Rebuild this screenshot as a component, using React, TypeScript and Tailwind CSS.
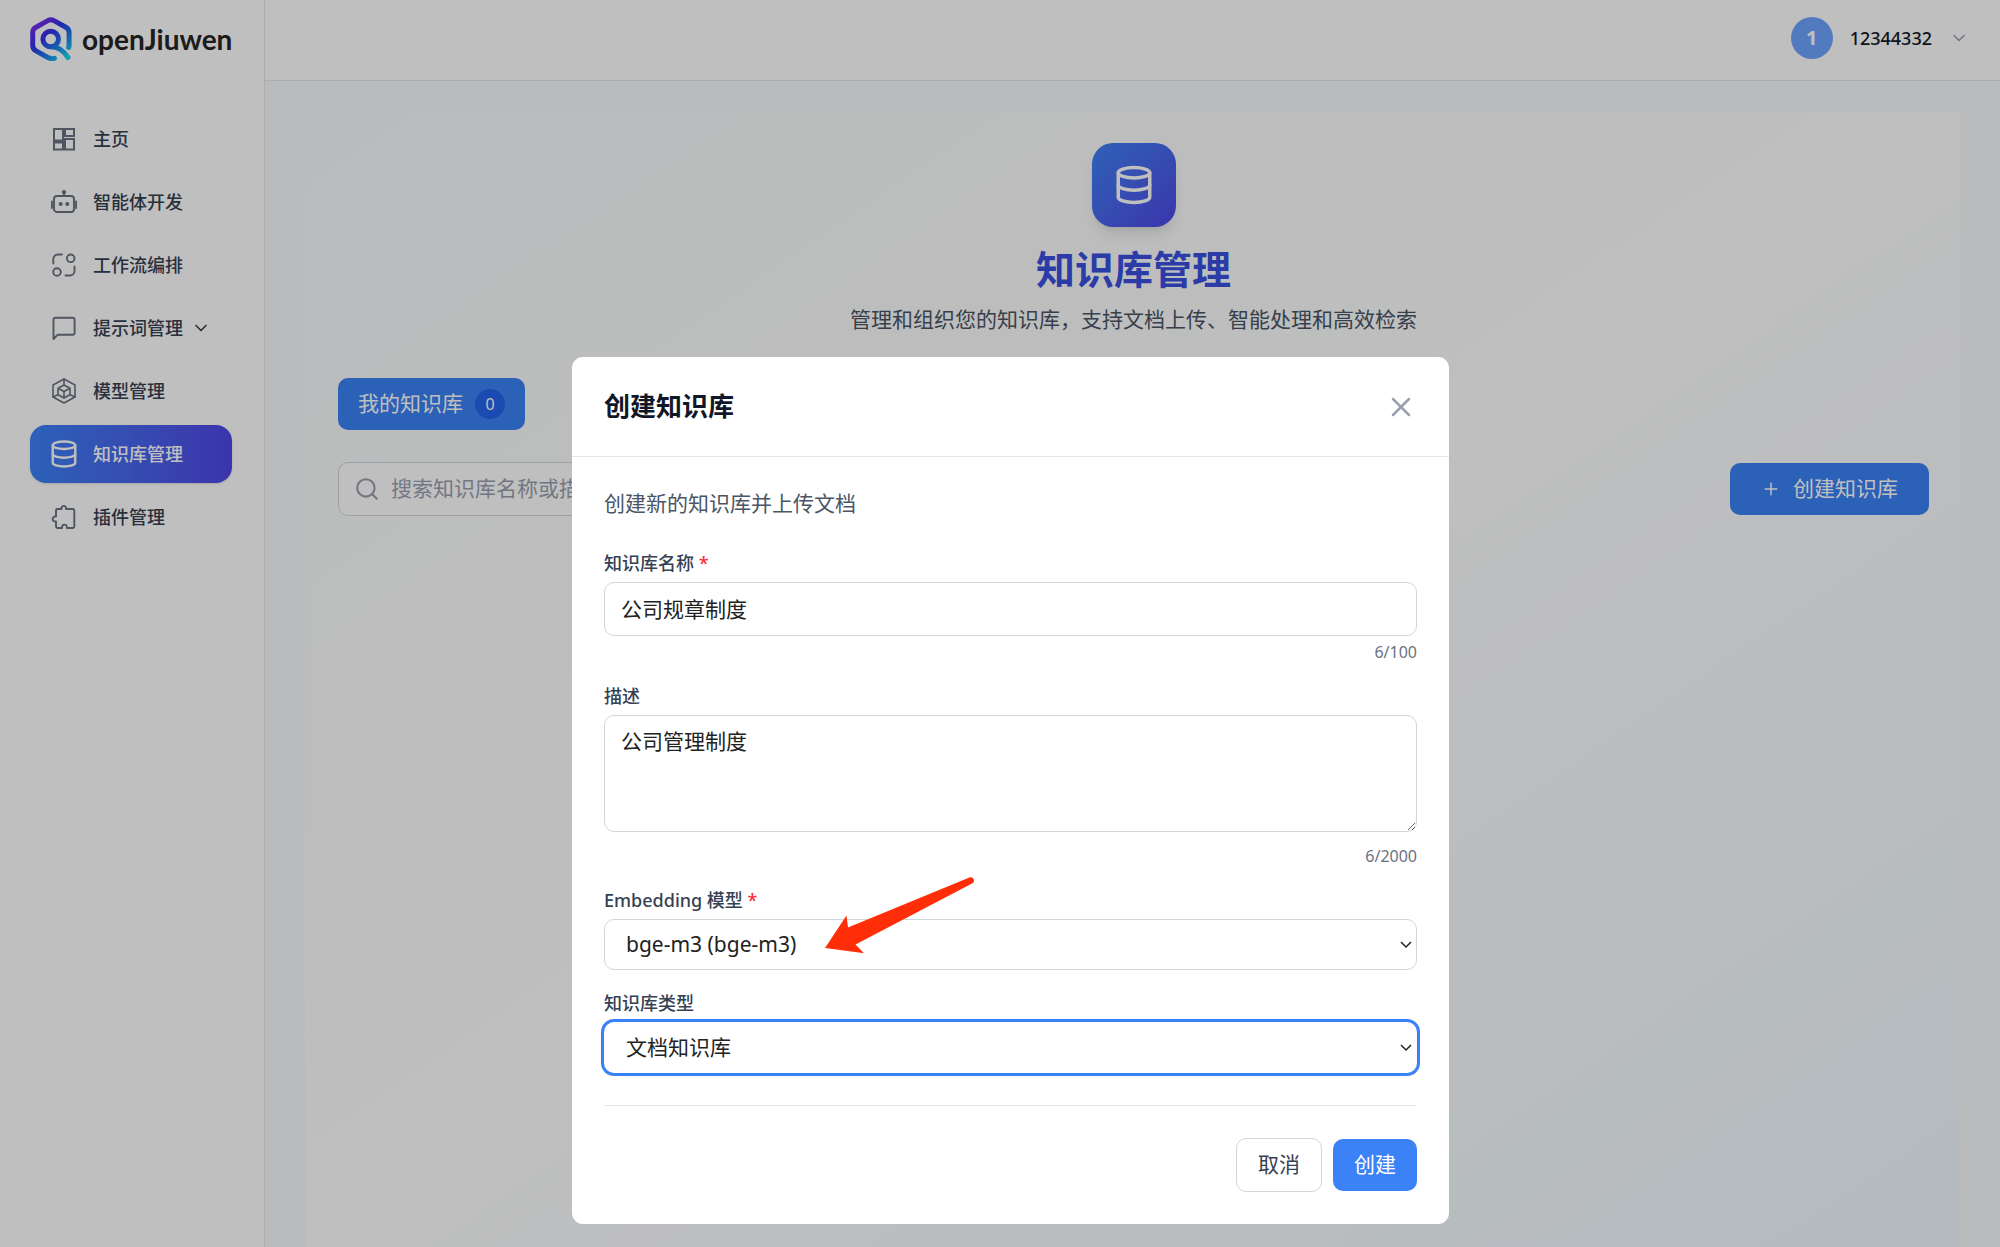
import type { ReactNode } from "react";
import { ChevronDown, Database, Plus, Search, X } from "lucide-react";

interface NavItem {
  label: string;
  icon: ReactNode;
  active?: boolean;
  expandable?: boolean;
}

function LineIcon({ children }: { children: ReactNode }) {
  return (
    <svg
      viewBox="0 0 26 26"
      className="size-[26px] shrink-0"
      fill="none"
      stroke="currentColor"
      strokeWidth="1.9"
      strokeLinecap="round"
      strokeLinejoin="round"
      aria-hidden="true"
    >
      {children}
    </svg>
  );
}

const NAV_ITEMS: NavItem[] = [
  {
    label: "主页",
    icon: (
      <LineIcon>
        <g strokeLinejoin="miter" strokeWidth="2">
          <path d="M3 3h9v11.500H3zM14 3h9v7h-9zM3 16.500h9v7H3zM14 13h9v10.500h-9z" />
        </g>
      </LineIcon>
    ),
  },
  {
    label: "智能体开发",
    icon: (
      <LineIcon>
        <rect x="3" y="7" width="20" height="16" rx="3" />
        <path d="M13 7V4M.9 12.500v6.500M25.100 12.500v6.500" />
        <circle cx="13" cy="3.200" r="1.200" fill="currentColor" />
        <circle cx="9.700" cy="15" r="1.100" fill="currentColor" />
        <circle cx="16.300" cy="15" r="1.100" fill="currentColor" />
      </LineIcon>
    ),
  },
  {
    label: "工作流编排",
    icon: (
      <LineIcon>
        <circle cx="19.700" cy="6.300" r="3.800" />
        <circle cx="6" cy="20" r="3.800" />
        <path d="M2.300 11.500V7a4.500 4.500 0 0 1 4.500-4.500H11M23.500 14.500V19a4.500 4.500 0 0 1-4.500 4.500h-4.500" />
      </LineIcon>
    ),
  },
  {
    label: "提示词管理",
    expandable: true,
    icon: (
      <LineIcon>
        <path d="M2.500 24V4.500A1.800 1.800 0 0 1 4.300 2.700h17.500A1.800 1.800 0 0 1 23.600 4.500v13.500a1.800 1.800 0 0 1-1.800 1.800H6.500z" />
      </LineIcon>
    ),
  },
  {
    label: "模型管理",
    icon: (
      <LineIcon>
        <g strokeWidth="1.600">
          <path d="M13 1l11 6v12l-11 6-11-6V7z" />
          <path d="M13 7l6 3.300v6.400L13 20l-6-3.300v-6.400zM7 10.300l6 3.200 6-3.200M13 13.500V20M13 1v6M2 19l5-2.300M24 19l-5-2.300" />
        </g>
      </LineIcon>
    ),
  },
  {
    label: "知识库管理",
    active: true,
    icon: <Database className="size-[30px] -mx-[2px] shrink-0" strokeWidth={1.9} aria-hidden="true" />,
  },
  {
    label: "插件管理",
    icon: (
      <LineIcon>
        <path d="M6 5h4.500C10 .8 15.500.8 15 5h6.800A1.500 1.500 0 0 1 23.300 6.500V22.500a1.500 1.500 0 0 1-1.500 1.500H16c0-4.500-5-4.500-5 0H6.500A1.500 1.500 0 0 1 5 22.500V17.500C.5 18 .5 12 5 12.500V6.500A1.500 1.500 0 0 1 6 5z" />
      </LineIcon>
    ),
  },
];

function Logo() {
  return (
    <a href="#" className="flex items-center gap-[10px]">
      <svg viewBox="0 0 42 44" className="h-[44px] w-[42px]" fill="none" strokeLinecap="round" strokeLinejoin="round" aria-hidden="true">
        <defs>
          <linearGradient id="logo" x1="6" y1="2" x2="38" y2="40" gradientUnits="userSpaceOnUse">
            <stop stopColor="#8f2af0" />
            <stop offset="0.400" stopColor="#2c34e8" />
            <stop offset="0.650" stopColor="#2070e8" />
            <stop offset="1" stopColor="#18d8ea" />
          </linearGradient>
        </defs>
        <g stroke="url(#logo)" strokeWidth="5">
          <path d="M24.500 41.300c-2.200.6-4.500.4-6.700-.8L6 33.800a6 6 0 0 1-3.300-5.300V15.500A6 6 0 0 1 6 10.200l11.800-6.600a6 6 0 0 1 6.200 0l11.800 6.600a6 6 0 0 1 3.300 5.300v13c0 .8-.2 1.500-.4 2" />
          <circle cx="20.700" cy="22" r="7.800" />
          <path d="M22 29.800c7 .2 11.500 4 16 10.700" />
        </g>
      </svg>
      <span className="font-[Lato] text-[28px] font-bold text-[#262626]">openJiuwen</span>
    </a>
  );
}

function Sidebar() {
  return (
    <aside className="w-[265px] shrink-0 border-r border-gray-200 bg-white">
      <div className="flex h-[78px] items-center px-[30px]">
        <Logo />
      </div>
      <nav className="mt-8 flex flex-col gap-[5px] pr-8 pl-[30px]">
        {NAV_ITEMS.map((item) => (
          <a
            key={item.label}
            href="#"
            aria-current={item.active ? "page" : undefined}
            className={
              item.active
                ? "flex h-[58px] items-center gap-4 rounded-2xl bg-gradient-to-r from-[#3b82f6] to-[#4f46e5] px-[21px] text-[18px] font-medium text-white shadow-sm"
                : "flex h-[58px] items-center gap-4 rounded-2xl px-[21px] text-[18px] font-medium text-gray-700"
            }
          >
            <span className={item.active ? "text-white" : "text-gray-500"}>{item.icon}</span>
            <span className="flex items-center gap-2 whitespace-nowrap">
              {item.label}
              {item.expandable && <ChevronDown className="size-5" aria-hidden="true" />}
            </span>
          </a>
        ))}
      </nav>
    </aside>
  );
}

function TopBar() {
  return (
    <header className="flex h-[81px] shrink-0 items-center justify-end border-b border-gray-200 bg-white pr-[31px] pb-1">
      <button type="button" className="flex items-center gap-[17px] text-[18px] font-medium text-gray-900">
        <span className="flex size-[42px] items-center justify-center rounded-full bg-[#6ea5ff] text-[20px] font-bold text-white">1</span>
        12344332
        <ChevronDown className="size-5 text-gray-400" aria-hidden="true" />
      </button>
    </header>
  );
}

function KnowledgePage() {
  return (
    <main className="flex grow flex-col bg-[#f8fafc] px-[40px] pt-[31px]">
      <div className="grow bg-gradient-to-br from-[#f8fafc] via-white to-[#f0f9ff] pt-[31px] pr-[31px] pl-[33px]">
        <div className="flex flex-col items-center">
          <div className="flex size-[84px] items-center justify-center rounded-[21px] bg-gradient-to-br from-[#3b82f6] to-[#4f46e5] text-white shadow-lg">
            <Database className="size-[42px]" aria-hidden="true" />
          </div>
          <h1 className="mt-[18px] text-[39px] leading-[47px] font-bold text-[#3a50e0]">知识库管理</h1>
          <p className="mt-3 text-[21px] leading-[31px] text-gray-600">管理和组织您的知识库，支持文档上传、智能处理和高效检索</p>
        </div>
        <div className="mt-[43px] flex">
          <button type="button" className="flex h-[52px] items-center gap-3 rounded-[10px] bg-[#3b82f6] px-5 text-[21px] text-white">
            我的知识库
            <span className="flex size-[30px] items-center justify-center rounded-full bg-[#2563eb] text-[16px]">0</span>
          </button>
        </div>
        <div className="mt-8 flex items-center justify-between">
          <label className="flex h-[54px] w-[500px] items-center gap-[11px] rounded-[10px] border border-gray-300 bg-white px-[15px] text-[21px]">
            <Search className="size-[26px] shrink-0 text-gray-400" aria-hidden="true" />
            <input type="search" aria-label="搜索知识库" placeholder="搜索知识库名称或描述" className="min-w-0 grow bg-transparent outline-none placeholder:text-gray-400" />
          </label>
          <button type="button" className="flex h-[52px] items-center gap-3 rounded-[10px] bg-[#3b82f6] px-[31px] text-[21px] text-white">
            <Plus className="size-5" strokeWidth={1.8} aria-hidden="true" />
            创建知识库
          </button>
        </div>
      </div>
    </main>
  );
}

function FieldLabel({ htmlFor, required, children }: { htmlFor: string; required?: boolean; children: ReactNode }) {
  return (
    <label htmlFor={htmlFor} className="block text-[18px] leading-[26px] font-medium text-gray-700">
      {children}
      {required && <span className="text-red-500"> *</span>}
    </label>
  );
}

function SelectChevron() {
  return (
    <svg viewBox="0 0 12 8" className="pointer-events-none absolute top-1/2 right-[5px] h-2 w-3 -translate-y-1/2" fill="none" stroke="#222" strokeWidth="1.500" aria-hidden="true">
      <path d="M1 1l5 5 5-5" />
    </svg>
  );
}

function CreateDialog() {
  return (
    <div role="dialog" aria-modal="true" aria-labelledby="dialog-title" className="w-[877px] rounded-[11px] bg-white text-[21px] text-[#222]">
      <div className="flex h-[100px] items-center justify-between border-b border-gray-200 px-8">
        <h2 id="dialog-title" className="text-[26px] font-bold text-gray-900">创建知识库</h2>
        <button type="button" aria-label="关闭" className="text-gray-400">
          <X className="size-8" strokeWidth={1.9} aria-hidden="true" />
        </button>
      </div>
      <form className="px-8 pt-[31px] pb-8">
        <p className="leading-[31px] text-gray-600">创建新的知识库并上传文档</p>

        <div className="mt-[31px]">
          <FieldLabel htmlFor="name" required>知识库名称</FieldLabel>
          <input id="name" defaultValue="公司规章制度" className="mt-[6px] block h-[54px] w-full rounded-[10px] border border-gray-300 px-4 pb-[2px] outline-none" />
          <p className="mt-[6px] text-right text-[16px] leading-[21px] text-gray-500">6/100</p>
        </div>

        <div className="mt-5">
          <FieldLabel htmlFor="description">描述</FieldLabel>
          <textarea id="description" defaultValue="公司管理制度" className="mt-[6px] block h-[117px] w-full resize-y rounded-[10px] border border-gray-300 px-4 py-[10px] leading-[31px] outline-none" />
          <p className="mt-[14px] text-right text-[16px] leading-[21px] text-gray-500">6/2000</p>
        </div>

        <div className="mt-5">
          <FieldLabel htmlFor="embedding" required>Embedding 模型</FieldLabel>
          <div className="relative mt-[6px]">
            <select id="embedding" className="block h-[51px] w-full appearance-none rounded-[10px] border border-gray-300 bg-white px-[21px] outline-none">
              <option>bge-m3 (bge-m3)</option>
            </select>
            <SelectChevron />
          </div>
        </div>

        <div className="mt-5">
          <FieldLabel htmlFor="kind">知识库类型</FieldLabel>
          <div className="relative mt-[6px]">
            <select id="kind" className="block h-[51px] w-full appearance-none rounded-[10px] bg-white px-[22px] ring-[3px] ring-[#3b82f6] outline-none">
              <option>文档知识库</option>
            </select>
            <SelectChevron />
          </div>
        </div>

        <div className="mt-8 flex items-center justify-end gap-[11px] border-t border-gray-200 pt-8">
          <button type="button" className="h-[54px] rounded-[10px] border border-gray-300 bg-white px-[21px] text-gray-700">取消</button>
          <button type="submit" className="h-[52px] rounded-[10px] bg-[#3b82f6] px-[21px] text-white">创建</button>
        </div>
      </form>
    </div>
  );
}

export default function App() {
  return (
    <div className="flex min-h-screen font-['Noto_Sans','Noto_Sans_CJK_SC',sans-serif]">
      <Sidebar />
      <div className="flex grow flex-col">
        <TopBar />
        <KnowledgePage />
      </div>
      <div className="fixed inset-0 flex items-end justify-center bg-black/25 pb-[23px] pl-[21px]">
        <CreateDialog />
        <svg viewBox="0 0 150 76" className="pointer-events-none absolute top-[877px] left-[825px] h-[76px] w-[150px]" aria-hidden="true">
          <path d="M145 .3c3-.8 5.500 3 3 5.600L30.500 67.500l8.500 8.700L0 71l21.500-32.500 1.500 12z" fill="#ff2d08" />
        </svg>
      </div>
    </div>
  );
}
